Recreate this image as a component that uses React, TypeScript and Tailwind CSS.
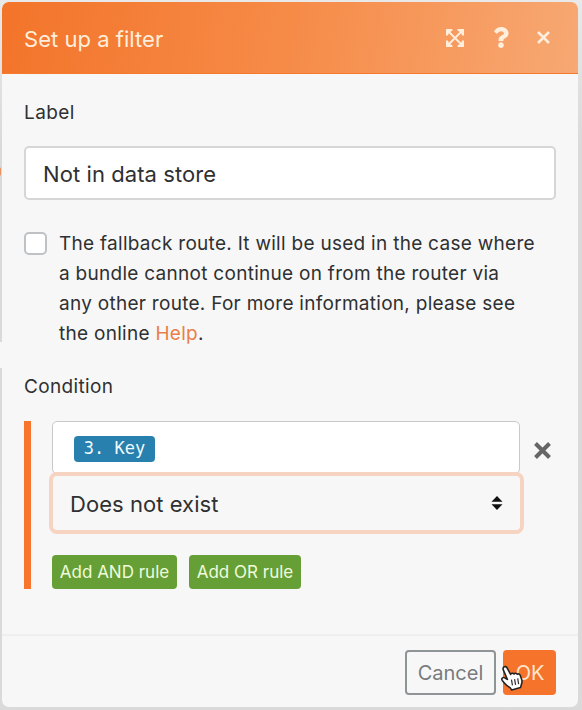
import React from "react";
import { FaQuestion } from "react-icons/fa";

function ExpandIcon() {
  return (
    <svg width="20" height="20" viewBox="0 0 20 20" fill="none" stroke="currentColor">
      <path d="M3 3 17 17M17 3 3 17" strokeWidth="1.8" />
      <path d="M1 1h6.4v1.8L5 4 4 5 2.8 7.4H1ZM19 1h-6.4v1.8L15 4l1 1 1.2 2.4H19ZM1 19h6.4v-1.8L5 16l-1-1-1.2-2.4H1ZM19 19h-6.4v-1.8L15 16l1-1 1.2-2.4H19Z" fill="currentColor" stroke="none" />
    </svg>
  );
}

function HandCursor() {
  return (
    <svg className="absolute left-[-2px] top-[14px]" width="24" height="28" viewBox="0 0 23 26">
      <path
        d="M2.6 2.6c1-1 2.5-.6 3.2.7l3.4 6.3c.6-1.3 2.4-1.5 3.3-.4.7-1.1 2.4-1 3 .2 1-.7 2.4-.2 2.9 1l1.5 4.2c.6 2 .1 3.6-.5 5l-.7 2.6-8.4 2.4-1.4-2.2c-2.1-1.3-4-2.6-5.7-4.7l-2-2.4c-1.2-1.7.7-3.5 2.4-2.4l2.6 1.5-3.9-8.9c-.5-1.1-.5-2.1.3-2.9Z"
        fill="#fff"
        stroke="#222"
        strokeWidth="1.5"
        strokeLinejoin="round"
      />
      <path d="M10 14.5l1 5.5M13 14l1 5.5M16 13.3l.9 5.5" stroke="#333" strokeWidth="1.2" />
    </svg>
  );
}

export default function App() {
  return (
    <div className="relative h-[710px] w-[582px] overflow-hidden bg-linear-to-b from-[#e9e9e9] to-[#dadada] to-20% pl-[2px] pt-[2px] font-['Inter','Liberation_Sans',sans-serif] text-[#2f3031]">
      <div className="absolute left-[-3px] top-[167px] h-[9px] w-[4px] rounded-full bg-[#e8935f]" />
      <div className="absolute left-0 top-[342px] h-[26px] w-[2px] bg-[#f7f7f7]" />
      <div className="flex h-[705px] w-[576px] flex-col overflow-hidden rounded-[7px] bg-[#f7f7f7]">
        <header className="flex h-[72px] shrink-0 items-center border-b border-[#f7792c] bg-linear-[100deg] from-[#f3742a] via-[#f68b48] via-50% to-[#f7a873] pl-[22px] text-[#ffeedb]">
          <h1 className="w-[421px] whitespace-nowrap pt-[2px] text-[22px] leading-[30px] tracking-[0.03px]">Set up a filter</h1>
          <ExpandIcon />
          <FaQuestion className="ml-[28px] h-[21px] w-[16px]" />
          <svg className="ml-[28px]" width="13" height="13" viewBox="0 0 13 13" stroke="currentColor" strokeWidth="2.6">
            <path d="M1 1l11 11M12 1 1 12" />
          </svg>
        </header>

        <main className="flex h-[560px] shrink-0 flex-col px-[22px]">
          <label className="mt-[24px] h-[30px] text-[19px] leading-[30px] tracking-[0.4px]">Label</label>
          <div className="mt-[18px] flex h-[54px] items-center rounded-[5px] border-2 border-[#d6d6d6] bg-white pl-[17px] pt-[2px] text-[22px] tracking-[0.08px]">
            <span>Not in data store</span>
          </div>

          <div className="mt-[28px] flex">
            <div className="mt-[4px] h-[23px] w-[23px] rounded-[5px] border-2 border-[#bfc2c5] bg-white" />
            <p className="ml-[12px] whitespace-nowrap pt-px text-[19px] leading-[30px] tracking-[0.28px]">
              The fallback route. It will be used in the case where
              <br />a bundle cannot continue on from the router via
              <br />any other route. For more information, please see
              <br />the online <span className="text-[#e97f48]">Help</span>.
            </p>
          </div>

          <span className="mt-[23px] h-[30px] text-[19px] leading-[30px] tracking-[0.35px]">Condition</span>

          <section className="mt-[19px] flex h-[168px] border-l-[7px] border-[#f7752c] pl-[21px]">
            <div>
              <div className="h-[53px] w-[468px] rounded-[5px] border border-[#c9c9c9] bg-white pl-[21px] pt-[14px]">
                <span className="flex h-[26px] w-[81px] items-center justify-center rounded-[4px] bg-[#2780ad] font-['DejaVu_Sans_Mono',monospace] text-[17px] text-[#f0faff]">
                  3. Key
                </span>
              </div>
              <div className="ml-[-3px] mt-[-2px] flex h-[62px] w-[475px] items-center justify-between rounded-[8px] border-4 border-[#f7d3c1] pl-[17px] pr-[17px] text-[22px]">
                <span className="pt-[3px] tracking-[0.05px]">Does not exist</span>
                <svg width="12" height="14" viewBox="0 0 12 14" fill="#111">
                  <path d="M6 0l5.5 5.7H.5ZM6 14l5.5-5.7H.5Z" />
                </svg>
              </div>
              <div className="mt-[21px] flex gap-[12px] text-[17px] text-[#effbdc]">
                <button className="h-[34px] w-[125px] whitespace-nowrap rounded-[4px] bg-[#659f35] pt-[2px]">Add AND rule</button>
                <button className="h-[34px] w-[112px] whitespace-nowrap rounded-[4px] bg-[#659f35] pt-[2px]">Add OR rule</button>
              </div>
            </div>
            <svg className="ml-[10px] mt-[21px]" width="17" height="17" viewBox="0 0 17 17" stroke="#666" strokeWidth="4">
              <path d="M1.5 1.5l14 14M15.5 1.5l-14 14" />
            </svg>
          </section>
        </main>

        <footer className="flex grow justify-end gap-[7px] border-t-2 border-[#efefef] pr-[22px] pt-[14px] text-[20px]">
          <button className="h-[45px] w-[91px] rounded-[4px] border-2 border-[#8f9497] text-[#777b7e]">Cancel</button>
          <button className="relative h-[45px] w-[53px] rounded-[4px] bg-[#f5732b] pl-px text-[#ffe7cf]">
            OK
            <HandCursor />
          </button>
        </footer>
      </div>
    </div>
  );
}
